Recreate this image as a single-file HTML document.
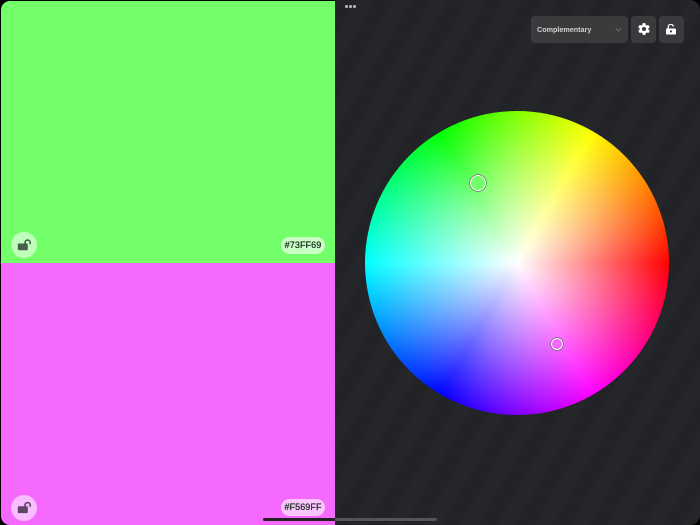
<!DOCTYPE html>
<html><head><meta charset="utf-8"><style>
html,body{margin:0;padding:0;width:700px;height:525px;overflow:hidden;background:#000}
#root{position:relative;width:700px;height:525px;overflow:hidden;background:#000}
#right{position:absolute;left:335px;top:0;width:365px;height:525px;border-top-right-radius:10px;border-bottom-right-radius:10px;
background-color:#232428;background-image:repeating-linear-gradient(-60deg,#25262a 0 16px,#222327 16px 32px)}
#g{position:absolute;left:1px;top:1px;width:334px;height:262px;background:#73FF69;border-top-left-radius:9px}
#p{position:absolute;left:1px;top:263px;width:334px;height:262px;background:#F569FF;border-bottom-left-radius:9px}
.c{position:absolute;left:11px;width:26px;height:26px;border-radius:50%;background:rgba(255,255,255,.55)}
.c svg{position:absolute;left:5px;top:6px}
.h{position:absolute;left:281px;width:44px;height:17px;border-radius:8.5px;background:rgba(255,255,255,.62);font:400 9px/17px "Liberation Sans",sans-serif;-webkit-text-stroke:.25px #1d2a22;letter-spacing:.1px;color:#1d2a22;text-align:center}
#wheel{position:absolute;left:365px;top:111px;width:304px;height:304px;border-radius:50%;
background:radial-gradient(circle closest-side,#fff 0,rgba(255,255,255,0) 100%),conic-gradient(from 90deg,#f00,#f0f,#00f,#0ff,#0f0,#ff0,#f00)}
.b{position:absolute;top:16px;height:27px;background:#3a3b3d;border-radius:4px}
.k{position:absolute;border-radius:50%;box-sizing:border-box;border:1.500px solid #fff;box-shadow:0 0 0 .7px #666}
.d{position:absolute;top:5px;width:2.500px;height:2.500px;background:#b5b5b5;border-radius:50%}
</style></head><body><div id="root">
<div id="right"></div>
<div id="g"></div><div id="p"></div>
<div class="c" style="top:232px"><svg width="16" height="15" viewBox="0 0 16 15"><rect x="1.800" y="5.500" width="10" height="6.800" rx="1" fill="#47604a"/><path d="M9 6V4.700a2.600 2.600 0 0 1 5.200 0V6.200" fill="none" stroke="#47604a" stroke-width="1.600"/></svg></div>
<div class="c" style="top:494.500px"><svg width="16" height="15" viewBox="0 0 16 15"><rect x="1.800" y="5.200" width="10" height="6.900" rx="1" fill="#5e4664"/><path d="M9 5.500V4.200a2.600 2.600 0 0 1 5.200 0V5.700" fill="none" stroke="#5e4664" stroke-width="1.600"/></svg></div>
<div class="h" style="top:237px">#73FF69</div>
<div class="h" style="top:499px">#F569FF</div>
<div class="d" style="left:345px"></div><div class="d" style="left:349px"></div><div class="d" style="left:353px"></div>
<div class="b" style="left:531px;width:97px"><span style="position:absolute;left:6px;top:0;font:bold 7.200px/27px 'Liberation Sans',sans-serif;color:#d2d2d3;white-space:nowrap">Complementary</span>
<svg style="position:absolute;left:84px;top:11px" width="7" height="6" viewBox="0 0 7 6"><path d="M1 1.500 3.500 4 6 1.500" fill="none" stroke="#6a6b6d" stroke-width="1.200"/></svg></div>
<div class="b" style="left:631px;width:25px"><svg style="position:absolute;left:5.500px;top:6px" width="14" height="14" viewBox="0 0 24 24"><path fill="#fff" fill-rule="evenodd" d="M19.400 13a7.600 7.600 0 0 0 0-2l2.100-1.600a.5.5 0 0 0 .1-.6l-2-3.500a.5.5 0 0 0-.6-.2l-2.500 1a7.500 7.500 0 0 0-1.700-1l-.4-2.700a.5.5 0 0 0-.5-.4h-4a.5.500 0 0 0-.5.400l-.4 2.700a7.500 7.500 0 0 0-1.700 1l-2.500-1a.5.5 0 0 0-.6.200l-2 3.500a.5.5 0 0 0 .1.600L4.600 11a7.600 7.600 0 0 0 0 2l-2.100 1.600a.5.5 0 0 0-.1.600l2 3.500a.5.5 0 0 0 .6.200l2.500-1a7.500 7.500 0 0 0 1.700 1l.4 2.700a.5.5 0 0 0 .5.400h4a.5.500 0 0 0 .5-.4l.4-2.700a7.500 7.500 0 0 0 1.700-1l2.500 1a.5.5 0 0 0 .6-.2l2-3.500a.5.5 0 0 0-.1-.6zM12 15.500a3.500 3.500 0 1 1 0-7 3.500 3.500 0 0 1 0 7z"/></svg></div>
<div class="b" style="left:659px;width:25px"><svg style="position:absolute;left:7px;top:8px" width="10" height="10.500" viewBox="0 0 10 10.500"><path fill="#fff" fill-rule="evenodd" d="M1 4.500h8a1 1 0 0 1 1 1v4a1 1 0 0 1-1 1H1a1 1 0 0 1-1-1v-4a1 1 0 0 1 1-1zM5 6.300a1.100 1.100 0 1 0 0 2.200 1.100 1.100 0 0 0 0-2.200z"/><path d="M2.300 4.500V3a2.500 2.500 0 0 1 5-.4" fill="none" stroke="#fff" stroke-width="1.300"/></svg></div>
<div id="wheel"></div>
<div class="k" style="left:469.500px;top:175px;width:16px;height:16px;background:#73FF69"></div>
<div class="k" style="left:550.500px;top:338px;width:12px;height:12px;background:#F569FF"></div>
<div style="position:absolute;left:263px;top:518px;width:174px;height:3px;border-radius:2px;background:linear-gradient(90deg,#222 0 72px,#555 72px)"></div>
</div></body></html>
